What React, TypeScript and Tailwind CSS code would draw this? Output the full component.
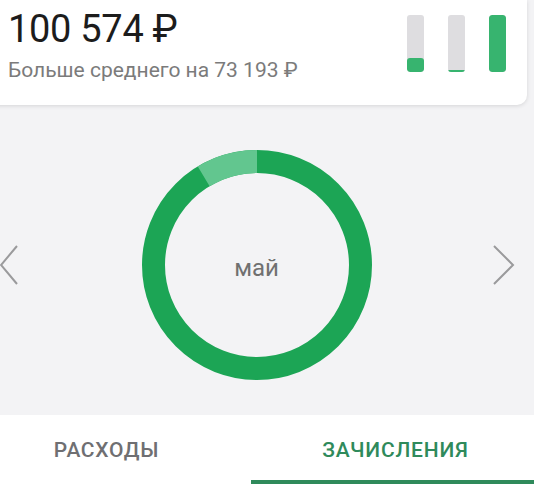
import React from "react";

// ── Sub-components ─────────────────────────────────────
interface BarProps {
  fill: number; // 0..1
}

function Bar({ fill }: BarProps) {
  return (
    <div className="w-[17px] h-[57px] rounded-[3px] bg-[#dedde0] flex flex-col justify-end overflow-hidden">
      <div className="w-full rounded-[3px] bg-[#37b46f]" style={{ height: `${fill * 100}%` }} />
    </div>
  );
}

function Donut() {
  return (
    <div className="relative w-[230px] h-[230px] flex items-center justify-center">
      <svg width="230" height="230" viewBox="0 0 230 230" className="absolute inset-0">
        <circle cx="115" cy="115" r="103.5" fill="none" stroke="#1ca555" strokeWidth="23" />
        <path d="M61.7 26.3 A103.5 103.5 0 0 1 115 11.5" fill="none" stroke="#62c68f" strokeWidth="23" />
      </svg>
      <span className="relative text-[24px] leading-none text-[#707070] mt-[6px]">май</span>
    </div>
  );
}

// ── Page ───────────────────────────────────────────────
export default function App() {
  return (
    <div className="w-[534px] h-[484px] overflow-hidden bg-[#f3f3f5] font-['Roboto',sans-serif]">
      {/* Summary card */}
      <div className="h-[105px] -ml-4 mr-[7px] bg-white rounded-br-[10px] shadow-[0_1px_4px_rgba(0,0,0,0.12)] flex justify-between pl-[24px] pr-[21px]">
        <div className="pt-[10px]">
          <p className="text-[38px] leading-none text-[#1c1c1c] tracking-[-0.3px]">100 574 ₽</p>
          <p className="mt-[12px] text-[21px] leading-none text-[#7b7b7b]">Больше среднего на 73 193 ₽</p>
        </div>
        <div className="flex gap-[24px] pt-[15px]">
          <Bar fill={0.25} />
          <Bar fill={0.04} />
          <Bar fill={1} />
        </div>
      </div>

      {/* Donut with month switcher */}
      <div className="h-[310px] flex items-center justify-between pt-[10px] pr-[19px]">
        <svg width="20" height="40" viewBox="0 0 20 40" fill="none" stroke="#9a9a9c" strokeWidth="2">
          <path d="M17 1 L1 20 L17 39" />
        </svg>
        <Donut />
        <svg width="22" height="40" viewBox="0 0 22 40" fill="none" stroke="#9a9a9c" strokeWidth="2">
          <path d="M1 1 L20 20 L1 39" />
        </svg>
      </div>

      {/* Tabs */}
      <div className="-ml-[38px] w-[578px] h-[69px] bg-white grid grid-cols-2">
        <div className="flex justify-center pt-[25px]">
          <span className="text-[21px] leading-none font-medium tracking-[0.7px] text-[#6f6f72]">РАСХОДЫ</span>
        </div>
        <div className="flex flex-col items-center justify-between pt-[25px]">
          <span className="text-[21px] leading-none font-medium tracking-[0.8px] text-[#2f8a5b]">ЗАЧИСЛЕНИЯ</span>
          <div className="w-full h-[4px] bg-[#2f8a5b]" />
        </div>
      </div>
    </div>
  );
}
